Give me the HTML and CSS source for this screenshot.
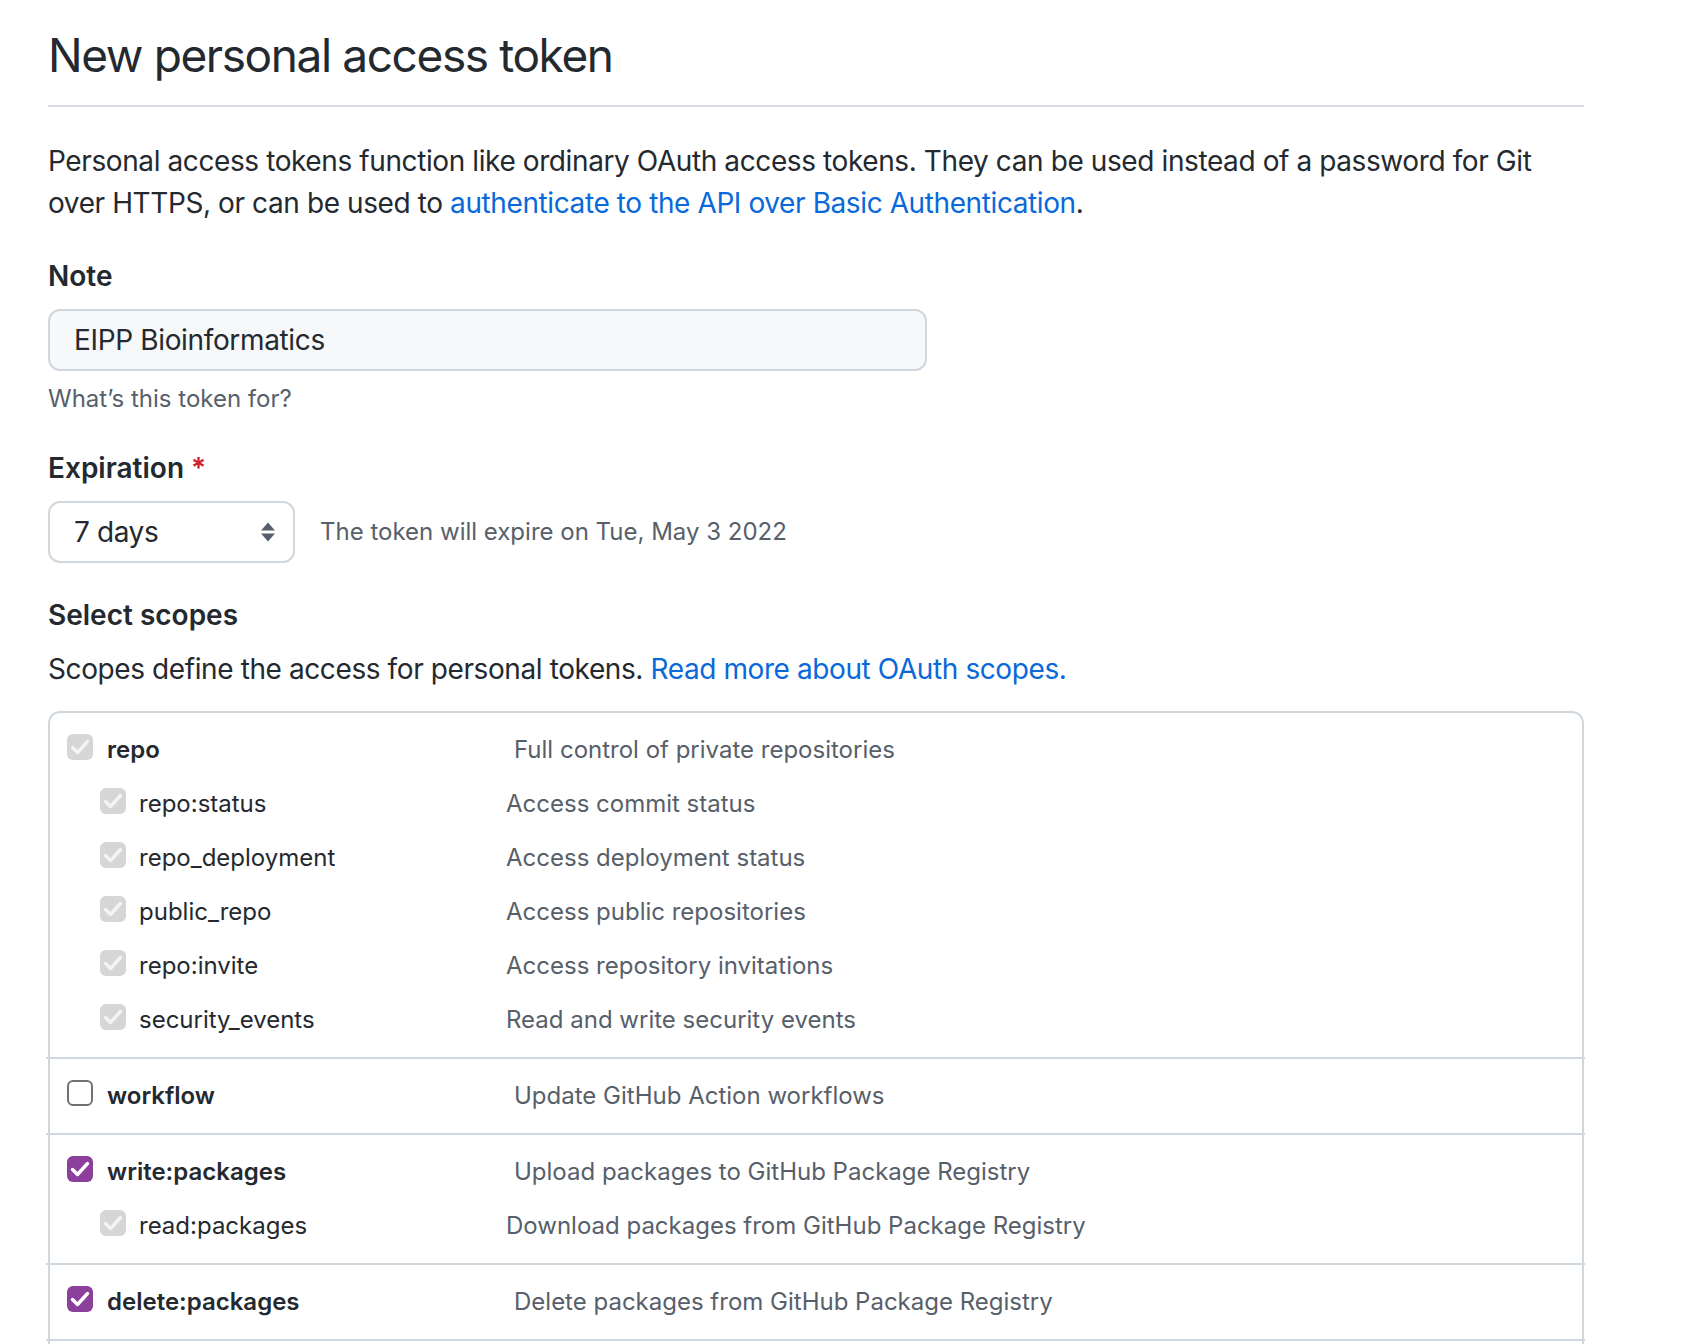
FILE: index.html
```html
<!DOCTYPE html>
<html lang="en">
<head>
<meta charset="utf-8">
<title>New personal access token</title>
<link rel="stylesheet" href="styles.css">
</head>
<body>
<div class="page">
  <div class="subhead">
    <h1 class="subhead-heading">New personal access token</h1>
  </div>
  <p class="intro">Personal access tokens function like ordinary OAuth access tokens. They can be used instead of a password for Git over HTTPS, or can be used to <a href="#" class="link">authenticate to the API over Basic Authentication</a>.</p>

  <div class="form-group">
    <label class="label">Note</label>
    <div class="input">EIPP Bioinformatics</div>
    <p class="note">What’s this token for?</p>
  </div>

  <div class="form-group expiration">
    <label class="label">Expiration <span class="required">*</span></label>
    <div class="expire-row">
      <div class="select">
        <span>7 days</span>
        <svg class="select-arrows" width="16" height="22" viewBox="0 0 16 22"><path d="M8 1.5 L15 9.5 L1 9.5 Z" fill="#57606a"/><path d="M1 12.5 L15 12.5 L8 20.5 Z" fill="#57606a"/></svg>
      </div>
      <span class="expire-note">The token will expire on Tue, May 3 2022</span>
    </div>
  </div>

  <div class="scopes-head">
    <div class="label">Select scopes</div>
    <p class="scopes-intro">Scopes define the access for personal tokens. <a href="#" class="link">Read more about OAuth scopes.</a></p>
  </div>

  <div class="scopes">
    <div class="group">
      <div class="row top">
        <div class="name"><span class="cb disabled"><svg viewBox="0 0 26 26"><path d="M5.5 13.5 L10.5 18.5 L20.5 7.5"/></svg></span><span class="scope">repo</span></div>
        <div class="desc">Full control of private repositories</div>
      </div>
      <div class="row child">
        <div class="name"><span class="cb disabled"><svg viewBox="0 0 26 26"><path d="M5.5 13.5 L10.5 18.5 L20.5 7.5"/></svg></span><span class="scope">repo:status</span></div>
        <div class="desc">Access commit status</div>
      </div>
      <div class="row child">
        <div class="name"><span class="cb disabled"><svg viewBox="0 0 26 26"><path d="M5.5 13.5 L10.5 18.5 L20.5 7.5"/></svg></span><span class="scope">repo_deployment</span></div>
        <div class="desc">Access deployment status</div>
      </div>
      <div class="row child">
        <div class="name"><span class="cb disabled"><svg viewBox="0 0 26 26"><path d="M5.5 13.5 L10.5 18.5 L20.5 7.5"/></svg></span><span class="scope">public_repo</span></div>
        <div class="desc">Access public repositories</div>
      </div>
      <div class="row child">
        <div class="name"><span class="cb disabled"><svg viewBox="0 0 26 26"><path d="M5.5 13.5 L10.5 18.5 L20.5 7.5"/></svg></span><span class="scope">repo:invite</span></div>
        <div class="desc">Access repository invitations</div>
      </div>
      <div class="row child">
        <div class="name"><span class="cb disabled"><svg viewBox="0 0 26 26"><path d="M5.5 13.5 L10.5 18.5 L20.5 7.5"/></svg></span><span class="scope">security_events</span></div>
        <div class="desc">Read and write security events</div>
      </div>
    </div>
    <div class="group">
      <div class="row top">
        <div class="name"><span class="cb empty"></span><span class="scope">workflow</span></div>
        <div class="desc">Update GitHub Action workflows</div>
      </div>
    </div>
    <div class="group">
      <div class="row top">
        <div class="name"><span class="cb checked"><svg viewBox="0 0 26 26"><path d="M5.5 13.5 L10.5 18.5 L20.5 7.5"/></svg></span><span class="scope">write:packages</span></div>
        <div class="desc">Upload packages to GitHub Package Registry</div>
      </div>
      <div class="row child">
        <div class="name"><span class="cb disabled"><svg viewBox="0 0 26 26"><path d="M5.5 13.5 L10.5 18.5 L20.5 7.5"/></svg></span><span class="scope">read:packages</span></div>
        <div class="desc">Download packages from GitHub Package Registry</div>
      </div>
    </div>
    <div class="group">
      <div class="row top">
        <div class="name"><span class="cb checked"><svg viewBox="0 0 26 26"><path d="M5.5 13.5 L10.5 18.5 L20.5 7.5"/></svg></span><span class="scope">delete:packages</span></div>
        <div class="desc">Delete packages from GitHub Package Registry</div>
      </div>
    </div>
    <div class="group">
      <div class="row top">
        <div class="name"><span class="cb empty"></span><span class="scope">admin:org</span></div>
        <div class="desc">Full control of orgs and teams, read and write org projects</div>
      </div>
    </div>
  </div>
</div>
</body>
</html>
```

FILE: styles.css
```css
* { box-sizing: border-box; }
html, body { margin: 0; padding: 0; background: #ffffff; }
body {
  font-family: Inter, "Liberation Sans", Arial, sans-serif;
  color: #24292f;
  font-size: 28px;
  line-height: 42px;
}
.page {
  width: 1584px;
  padding-left: 48px;
}
.subhead {
  padding-top: 25px;
  padding-bottom: 20px;
  border-bottom: 2px solid #d8dee4;
}
.subhead-heading {
  margin: 0;
  font-size: 46px;
  line-height: 60px;
  font-weight: 400;
  letter-spacing: -1.4px;
}
.intro {
  margin: 33px 0 0;
  font-size: 28px;
  line-height: 42px;
  letter-spacing: -0.4px;
}
.link { color: #0969da; text-decoration: none; }
.form-group { margin-top: 31px; }
.label {
  display: block;
  font-weight: 600;
  font-size: 28px;
  line-height: 42px;
}
.required { color: #cf222e; }
.input {
  margin-top: 12px;
  width: 879px;
  height: 62px;
  border: 2px solid #d0d7de;
  border-radius: 12px;
  background: #f6f8fa;
  padding: 0 24px;
  display: flex;
  align-items: center;
  font-size: 28px;
  letter-spacing: -0.35px;
}
.note {
  margin: 10px 0 0;
  font-size: 24px;
  line-height: 36px;
  color: #57606a;
}
.expiration { margin-top: 30px; }
.expire-row {
  margin-top: 12px;
  display: flex;
  align-items: center;
  gap: 25px;
}
.select {
  width: 247px;
  height: 62px;
  border: 2px solid #d0d7de;
  border-radius: 12px;
  padding: 0 17px 0 24px;
  display: flex;
  align-items: center;
  justify-content: space-between;
  font-size: 28px;
  letter-spacing: -0.4px;
}
.expire-note {
  font-size: 24px;
  color: #57606a;
}
.scopes-head { margin-top: 31px; }
.scopes-intro {
  margin: 12px 0 0;
  letter-spacing: -0.4px;
}
.scopes {
  margin-top: 21px;
  width: 1536px;
  border: 2px solid #d0d7de;
  border-bottom: none;
  border-radius: 12px 12px 0 0;
  font-size: 24px;
}
.group {
  padding: 10px 3px 10px 4px;
  border-bottom: 2px solid #d0d7de;
  margin: 0 -3px 0 -4px;
}
.row {
  display: grid;
  grid-template-columns: 456px 1fr;
  height: 54px;
  align-items: center;
}
.name {
  display: flex;
  align-items: center;
}
.row.top .name { padding-left: 17px; }
.row.child .name { padding-left: 50px; }
.row.top .scope { font-weight: 600; margin-left: 14px; }
.row.child .scope { margin-left: 13px; }
.desc { color: #57606a; }
.row.top .desc { padding-left: 8px; }
.cb {
  width: 26px;
  height: 26px;
  border-radius: 6px;
  display: inline-flex;
  flex: none;
  margin-bottom: 6px;
}
.cb svg { width: 26px; height: 26px; }
.cb svg path { fill: none; stroke-width: 3.4; stroke-linecap: round; stroke-linejoin: round; }
.cb.disabled { background: #d6d6d6; }
.cb.disabled svg path { stroke: #f4f4f4; }
.cb.checked { background: #8c3f9b; }
.cb.checked svg path { stroke: #ffffff; }
.cb.empty { background: #ffffff; border: 2px solid #717171; }
```
